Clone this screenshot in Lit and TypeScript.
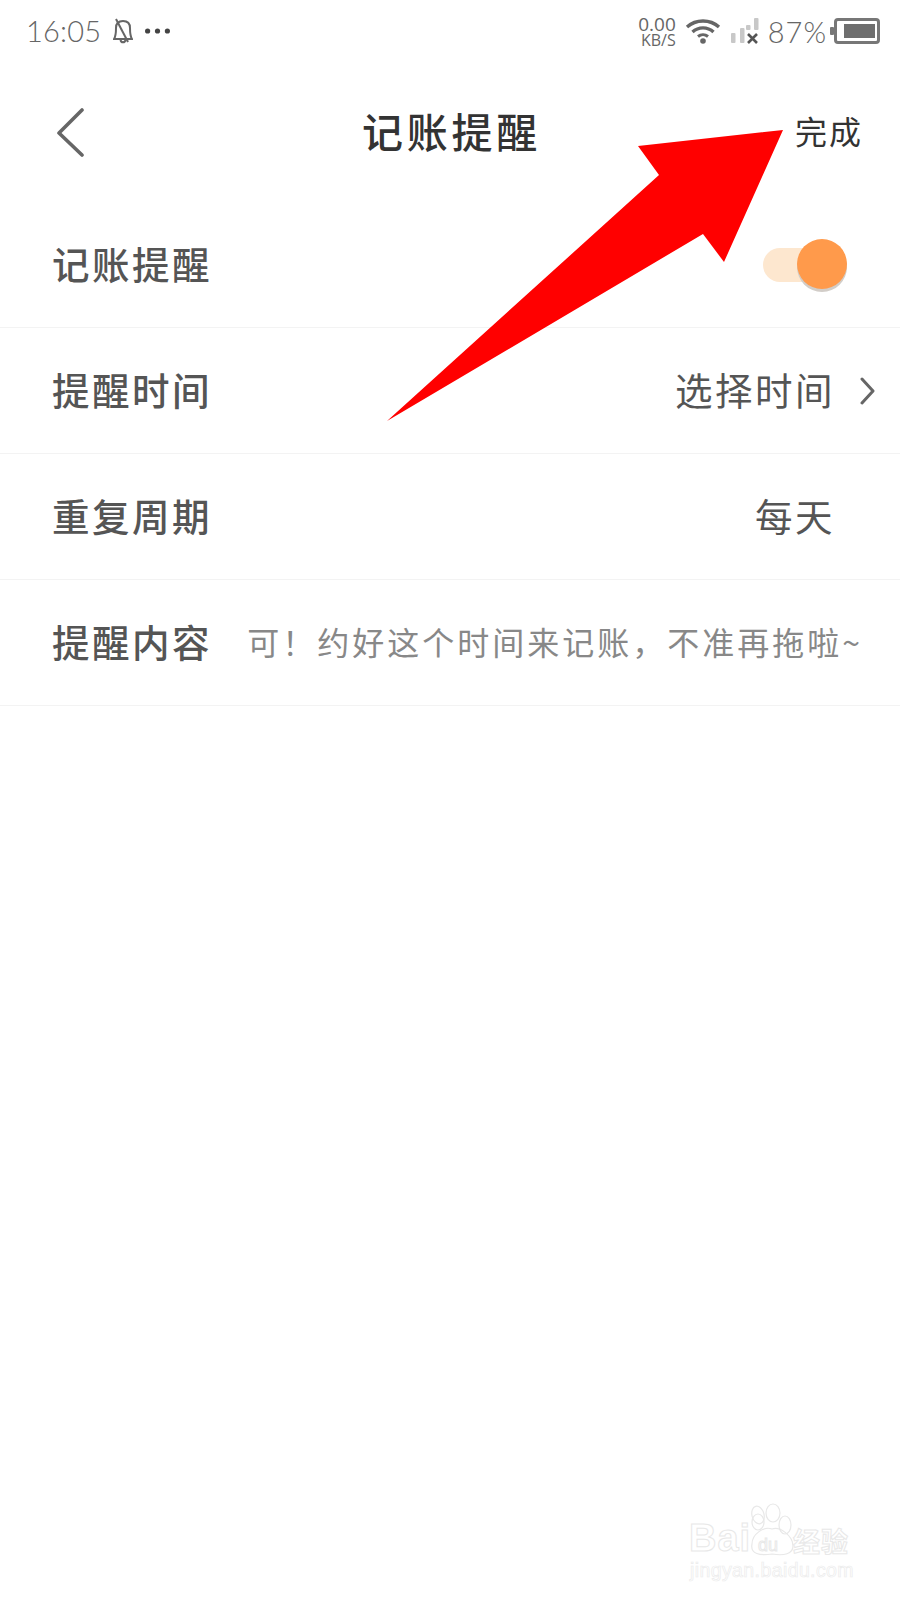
import { LitElement, html, css, svg } from "lit";
import { customElement } from "lit/decorators.js";

const HINT = "可\uFF01约好这个时间来记账\uFF0C不准再拖啦~";

@customElement("app-root")
export class AppRoot extends LitElement {
  static styles = css`
    :host {
      display: block;
      position: relative;
      width: 900px;
      height: 1600px;
      overflow: hidden;
      background: #fff;
      font-family: "Noto Sans CJK SC", "Liberation Serif", serif;
    }
    .status {
      height: 62px;
      display: flex;
      align-items: center;
      justify-content: space-between;
      padding: 0 20px 0 26px;
      color: #777;
      box-sizing: border-box;
    }
    .status-left, .status-right { display: flex; align-items: center; }
    .time {
      font-family: Lato, "Open Sans", sans-serif;
      font-weight: 300;
      font-size: 29px;
      letter-spacing: 0.2px;
      line-height: 62px;
      color: #666;
    }
    .bell { margin-left: 12px; }
    .dots { margin-left: 12px; }
    .speed {
      display: flex;
      flex-direction: column;
      align-items: flex-end;
      font-family: "Open Sans", sans-serif;
      color: #666;
      margin-right: 9px;
    }
    .speed b { font-weight: 400; font-size: 19px; line-height: 18px; }
    .speed i { font-style: normal; font-size: 16px; line-height: 15px; }
    .sig { margin-left: 10px; }
    .pct {
      font-family: Lato, "Open Sans", sans-serif;
      font-weight: 300;
      font-size: 29px;
      letter-spacing: 1px;
      margin-left: 9px;
      color: #666;
    }
    .bat { margin-left: 3px; }
    .header {
      height: 140px;
      display: flex;
      align-items: center;
      justify-content: space-between;
      padding: 0 37px 0 56px;
      position: relative;
    }
    .title {
      position: absolute;
      left: 362px;
      margin-bottom: 4px;
      font-size: 41px;
      letter-spacing: 3.75px;
      font-weight: 500;
      color: #333;
      line-height: 56px;
    }
    .done {
      font-size: 32px;
      letter-spacing: 2px;
      color: #333;
      line-height: 44px;
      margin-bottom: 4px;
    }
    .row {
      height: 125px;
      border-bottom: 1px solid #f3f3f3;
      display: flex;
      align-items: center;
      justify-content: space-between;
      padding: 0 25px 0 52px;
    }
    .label {
      font-size: 37.5px;
      letter-spacing: 2.5px;
      color: #555;
      font-weight: 500;
      white-space: nowrap;
      margin-bottom: 4px;
    }
    .right { display: flex; align-items: center; gap: 25px; }
    .value {
      font-size: 37.5px;
      letter-spacing: 2.5px;
      color: #555;
      white-space: nowrap;
      margin-bottom: 4px;
    }
    .chev { width: 15px; height: 28px; display: block; }
    .hint {
      font-size: 32px;
      letter-spacing: 3px;
      color: #888;
      white-space: nowrap;
      margin-right: 12px;
      margin-bottom: 4px;
    }
    .toggle {
      position: relative;
      width: 84px;
      height: 52px;
      margin-right: 28px;
      margin-top: 1px;
      display: flex;
      align-items: center;
    }
    .track {
      width: 60px;
      height: 34px;
      border-radius: 17px;
      background: #fde7cf;
    }
    .knob {
      position: absolute;
      right: 0;
      top: 0;
      width: 50px;
      height: 50px;
      border-radius: 50%;
      background: #ff9a4b;
      box-shadow: 0 3px 0 #d2cdc8;
    }
    .arrow { position: absolute; left: 0; top: 0; pointer-events: none; }
    .wm {
      position: absolute;
      left: 688px;
      top: 1500px;
      width: 170px;
      height: 84px;
      color: transparent;
      -webkit-text-stroke: 1px #e8e8e8;
      pointer-events: none;
    }
    .wm span { position: absolute; white-space: nowrap; }
    .wm .bai { left: 1px; top: 15px; font: 700 38px/46px "Liberation Sans", sans-serif; letter-spacing: 1px; }
    .wm .jy { left: 105px; top: 24px; font: 700 27px/34px "Noto Sans CJK SC", sans-serif; letter-spacing: 1px; }
    .wm .du { left: 70px; top: 35px; font: 400 18px/20px "Liberation Sans", sans-serif; }
    .wm .url { left: 2px; top: 58px; font: 400 19.5px/24px "Liberation Sans", sans-serif; letter-spacing: .4px; -webkit-text-stroke: .7px #ececec; }
    .wm svg { position: absolute; left: 0; top: 0; }
  `;

  private row(label: string, right: unknown) {
    return html`<div class="row"><span class="label">${label}</span>${right}</div>`;
  }

  render() {
    const chev = svg`<path d="M2 2 L13 14 L2 26" fill="none" stroke="#666" stroke-width="3" stroke-linecap="round" stroke-linejoin="round"/>`;
    return html`
      <div class="status">
        <div class="status-left">
          <span class="time">16:05</span>
          <svg class="bell" width="20" height="26" viewBox="0 0 20 26">
            <path d="M1 21 C3 18 3 14 3 10 C3 5 6 3 10 3 C14 3 17 5 17 10 C17 14 17 18 19 21 Z M7.5 22 C8 25 12 25 12.5 22" fill="none" stroke="#666" stroke-width="2"/>
            <path d="M3 1 L15 24" stroke="#666" stroke-width="2"/>
          </svg>
          <svg class="dots" width="25" height="6" viewBox="0 0 25 6">
            <circle cx="2.6" cy="3" r="2.6" fill="#444"/><circle cx="12.5" cy="3" r="2.6" fill="#444"/><circle cx="22.4" cy="3" r="2.6" fill="#444"/>
          </svg>
        </div>
        <div class="status-right">
          <div class="speed"><b>0.00</b><i>KB/S</i></div>
          <svg width="36" height="26" viewBox="0 0 36 26">
            <path d="M2 9 C11 1 25 1 34 9" fill="none" stroke="#666" stroke-width="3.4"/>
            <path d="M7.5 14 C13.5 8.5 22.5 8.5 28.5 14" fill="none" stroke="#666" stroke-width="3.4"/>
            <path d="M13 18.5 C16 16 20 16 23 18.5" fill="none" stroke="#666" stroke-width="3"/>
            <circle cx="18" cy="23" r="2.8" fill="#666"/>
          </svg>
          <svg class="sig" width="28" height="26" viewBox="0 0 28 26">
            <rect x="0" y="15" width="4.5" height="10" rx="1" fill="#c8c8c8"/>
            <rect x="9" y="10" width="4.5" height="15" rx="1" fill="#c8c8c8"/>
            <rect x="15" y="7" width="4.5" height="5" rx="1" fill="#c8c8c8"/>
            <rect x="23" y="0" width="4.5" height="12" rx="1" fill="#c8c8c8"/>
            <path d="M17 16 L26 25 M26 16 L17 25" stroke="#555" stroke-width="2.6"/>
          </svg>
          <span class="pct">87%</span>
          <svg class="bat" width="50" height="26" viewBox="0 0 50 26">
            <rect x="0" y="9" width="4" height="8" rx="1" fill="#777"/>
            <rect x="5.5" y="1.5" width="43" height="23" rx="2.5" fill="none" stroke="#777" stroke-width="3"/>
            <rect x="14" y="6" width="31" height="14" fill="#6e6e6e"/>
          </svg>
        </div>
      </div>
      <div class="header">
        <svg width="30" height="50" viewBox="0 0 30 50">
          <path d="M26 3 L3 26 L26 48" fill="none" stroke="#666" stroke-width="3.6" stroke-linecap="round" stroke-linejoin="round"/>
        </svg>
        <span class="title">记账提醒</span>
        <span class="done">完成</span>
      </div>
      ${this.row("记账提醒", html`<div class="toggle"><div class="track"></div><div class="knob"></div></div>`)}
      ${this.row("提醒时间", html`<div class="right"><span class="value">选择时间</span><svg class="chev" viewBox="0 0 15 28">${chev}</svg></div>`)}
      ${this.row("重复周期", html`<div class="right"><span class="value">每天</span><span class="chev"></span></div>`)}
      ${this.row("提醒内容", html`<span class="hint">${HINT}</span>`)}
      <svg class="arrow" width="900" height="1600" viewBox="0 0 900 1600">
        <polygon points="783,130 724,262 703,234 387,421 659,175 638,146" fill="#ff0000"/>
      </svg>
      <div class="wm">
        <svg width="170" height="84" viewBox="0 0 170 84" fill="none" stroke="#e8e8e8" stroke-width="1.2">
          <ellipse cx="70" cy="15" rx="6" ry="9" transform="rotate(-15 70 15)"/>
          <ellipse cx="85" cy="13" rx="7" ry="9"/>
          <ellipse cx="70" cy="22" rx="6" ry="8"/>
          <ellipse cx="97" cy="25" rx="6" ry="9"/>
          <path d="M64 44 C64 34 76 26 84 29 C92 26 105 36 105 46 C105 54 96 56 84 54 C72 56 62 54 64 44 Z"/>
        </svg>
        <span class="bai">Bai</span>
        <span class="du">du</span>
        <span class="jy">经验</span>
        <span class="url">jingyan.baidu.com</span>
      </div>
    `;
  }
}
